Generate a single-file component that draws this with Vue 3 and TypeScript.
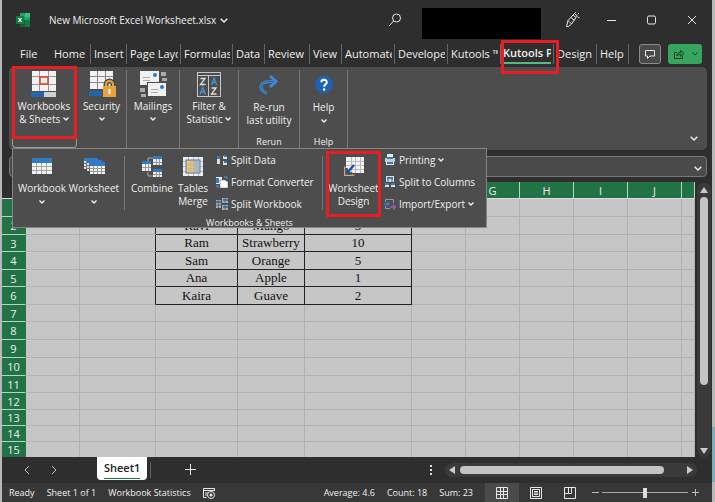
<script setup lang="ts">
import { ref } from 'vue'

interface Tab {
  label: string
  width: number
  active?: boolean
}

interface Row {
  n: string
  height: number
  cells?: [string, string, string]
}

const tabs: Tab[] = [
  { label: 'File', width: 39 },
  { label: 'Home', width: 40 },
  { label: 'Insert', width: 36 },
  { label: 'Page Layout', width: 54 },
  { label: 'Formulas', width: 52 },
  { label: 'Data', width: 32 },
  { label: 'Review', width: 45 },
  { label: 'View', width: 32 },
  { label: 'Automate', width: 53 },
  { label: 'Developer', width: 53 },
  { label: 'Kutools ™', width: 53 },
  { label: 'Kutools Plus', width: 53, active: true },
  { label: 'Design', width: 43 },
  { label: 'Help', width: 32 },
]

const columns = [
  { name: '', width: 54 },
  { name: '', width: 76 },
  { name: '', width: 82 },
  { name: '', width: 67 },
  { name: '', width: 107 },
  { name: '', width: 54 },
  { name: 'G', width: 54 },
  { name: 'H', width: 54 },
  { name: 'I', width: 54 },
  { name: 'J', width: 54 },
]

const rows: Row[] = [
  { n: '', height: 18, cells: ['', '', ''] },
  { n: '2', height: 18, cells: ['Ravi', 'Mango', '5'] },
  { n: '3', height: 17, cells: ['Ram', 'Strawberry', '10'] },
  { n: '4', height: 18, cells: ['Sam', 'Orange', '5'] },
  { n: '5', height: 17, cells: ['Ana', 'Apple', '1'] },
  { n: '6', height: 18, cells: ['Kaira', 'Guave', '2'] },
  { n: '7', height: 17 },
  { n: '8', height: 18 },
  { n: '9', height: 18 },
  { n: '10', height: 18 },
  { n: '11', height: 17 },
  { n: '12', height: 17 },
  { n: '13', height: 16 },
  { n: '14', height: 16 },
  { n: '15', height: 16 },
]

const formula = ref('')
const zoom = ref(50)
</script>

<template>
  <div class="desktop">
    <div class="window">
      <header class="titlebar">
        <svg class="logo" viewBox="0 0 14 14" width="14" height="14">
          <rect x="4" y="0" width="10" height="14" rx="1" fill="#21a366" />
          <path d="M9 0h4a1 1 0 0 1 1 1v3H9z" fill="#33c481" />
          <path d="M4 7h5v7H5a1 1 0 0 1-1-1z" fill="#185c37" />
          <path d="M9 7h5v6a1 1 0 0 1-1 1H9z" fill="#107c41" />
          <rect x="0" y="3" width="8" height="8" rx="1" fill="#107c41" />
          <path d="M2.500 5l3 4M5.500 5l-3 4" stroke="#fff" stroke-width="1.2" />
        </svg>
        <button class="filename">
          New Microsoft Excel Worksheet.xlsx
          <svg viewBox="0 0 8 5" width="8" height="5"><path d="M.7.7 4 4 7.300.7" class="line" /></svg>
        </button>
        <button class="icon-btn search" aria-label="Search">
          <svg viewBox="0 0 14 14" width="14" height="14">
            <circle cx="8.500" cy="5" r="4" class="thin" /><path d="M5.600 8 1 13" class="thin" />
          </svg>
        </button>
        <div class="account"></div>
        <button class="icon-btn pen" aria-label="Coming soon">
          <svg viewBox="0 0 16 16" width="16" height="16">
            <path d="M2.500 14.500 4 8.500 9 3l3 2.500-4.500 6.500-3 2.500zM4 8.500l3.500 3.500M7 5.500l3.500 3M9 3l1.500-1.500 3 2.500L12 5.500M13.800 2.300l1.200-1.300M14.200 5.500l1.300-.2M11.500.8l.2-.8" class="thin" />
          </svg>
        </button>
        <button class="icon-btn" aria-label="Minimize">
          <svg viewBox="0 0 10 10" width="10" height="10"><path d="M0 5.500h9" class="thin" /></svg>
        </button>
        <button class="icon-btn" aria-label="Maximize">
          <svg viewBox="0 0 10 10" width="10" height="10"><rect x=".5" y="1" width="8" height="8" rx="1.500" class="thin" /></svg>
        </button>
        <button class="icon-btn" aria-label="Close">
          <svg viewBox="0 0 10 10" width="10" height="10"><path d="M1 1l8 8M9 1 1 9" class="thin" /></svg>
        </button>
      </header>

      <nav class="tabs">
        <button
          v-for="tab in tabs"
          :key="tab.label"
          class="tab"
          :class="{ active: tab.active, first: tab.label === 'File', marked: tab.active }"
          :style="{ width: tab.width + 'px' }"
        >
          <span>{{ tab.label }}</span>
        </button>
        <div class="tab-actions">
          <button class="comment" aria-label="Comments">
            <svg viewBox="0 0 12 12" width="12" height="12"><path d="M1.500 2.500h9v5.500H6L3.500 10.500V8h-2z" class="thin" /></svg>
          </button>
          <button class="share" aria-label="Share">
            <svg viewBox="0 0 12 12" width="12" height="12">
              <path d="M4 4.500H1.500v6h8V8.500M3.800 8c.3-2.500 1.700-3.500 4-3.500V2.500l3 3-3 3v-2c-1.800 0-3 .3-4 1.500z" class="dark" />
            </svg>
            <svg viewBox="0 0 6 4" width="6" height="4"><path d="M.5.500 3 3 5.500.500" class="dark" /></svg>
          </button>
        </div>
      </nav>

      <section class="ribbon">
        <div class="group books">
          <button class="tool open marked">
            <svg viewBox="0 0 28 28" width="28" height="28">
              <rect x="2" y="1" width="24" height="20" fill="#f2f2f2" />
              <path d="M2 6.500h24M2 14.500h24M9.500 1v20M18.500 1v20" stroke="#999" />
              <rect x="10" y="7" width="8" height="7" fill="#eee" stroke="#d64a2c" stroke-width="1.600" />
              <rect x="1" y="22" width="13" height="5" fill="#2465ae" /><rect x="14" y="22" width="12" height="5" fill="#d0d0d0" />
            </svg>
            <span>Workbooks<br />&amp; Sheets <svg viewBox="0 0 6 4" width="6" height="4"><path d="M.5.500 3 3 5.500.500" class="line" /></svg></span>
          </button>
        </div>
        <div class="group security">
          <button class="tool">
            <svg viewBox="0 0 28 28" width="28" height="28">
              <rect x="2" y="1" width="23" height="18" fill="#f2f2f2" />
              <path d="M2 6.500h23M2 12.500h23M9.500 1v18M17.500 1v18" stroke="#888" />
              <rect x="1" y="21" width="13" height="5" fill="#2465ae" />
              <path d="M18 17v-2.500a3.500 3.500 0 0 1 7 0V17" fill="none" stroke="#4d4d4d" stroke-width="5" />
              <path d="M18 17v-2.500a3.500 3.500 0 0 1 7 0V17" fill="none" stroke="#e8a33d" stroke-width="2" />
              <rect x="15" y="16" width="13" height="11" fill="#e8a33d" />
              <path d="M21.500 19v5" stroke="#fff" stroke-width="2" />
            </svg>
            <span>Security</span>
            <svg viewBox="0 0 6 4" width="6" height="4"><path d="M.5.500 3 3 5.500.500" class="line" /></svg>
          </button>
        </div>
        <div class="group mailings">
          <button class="tool">
            <svg viewBox="0 0 28 28" width="28" height="28">
              <rect x="1" y="1" width="19" height="14" fill="#f0f0f0" /><circle cx="16" cy="5" r="2" fill="#2878cc" />
              <path d="M4 7.500h7M4 10.500h7" stroke="#aaa" />
              <path d="M22 2h5v4h-5zM23 8h5v3h-5zM1 18h5v4H1zM2 24h5v3H2z" fill="#aaa" />
              <rect x="8.500" y="12.500" width="19" height="14" fill="#f0f0f0" stroke="#4d4d4d" /><circle cx="23" cy="17" r="2" fill="#2878cc" />
              <path d="M12 19.500h7M12 22.500h7" stroke="#aaa" />
            </svg>
            <span>Mailings</span>
            <svg viewBox="0 0 6 4" width="6" height="4"><path d="M.5.500 3 3 5.500.500" class="line" /></svg>
          </button>
        </div>
        <div class="group filter">
          <button class="tool">
            <svg viewBox="0 0 28 28" width="28" height="28">
              <rect x="2.500" y="2.500" width="23" height="24" class="frame" /><path d="M2 5.500h24M13.500 6v21" class="frame" />
              <path d="M5.500 8.500h4.500l-4.500 6h5M16.500 18h4.500l-4.500 6h5" fill="none" stroke="#ddd" stroke-width="1.300" />
              <path d="M5 24.500l2.800-7 2.700 7M6 22h3.800M16.500 15l2.600-7 2.600 7M17.500 12.500h3.400" fill="none" stroke="#3f97db" stroke-width="1.300" />
            </svg>
            <span>Filter &amp;<br />Statistic <svg viewBox="0 0 6 4" width="6" height="4"><path d="M.5.500 3 3 5.500.500" class="line" /></svg></span>
          </button>
        </div>
        <div class="group rerun">
          <button class="tool low">
            <svg viewBox="0 0 22 22" width="22" height="22">
              <path d="M9 19C3 17 1.500 12.500 4.500 9.500 7 7 10 7.500 17 7.500M12 2l6 5.500-6 5.500" fill="none" stroke="#3b8ad8" stroke-width="3" />
              <path d="M9 18.500C3 17 2 12.500 4.500 9.500 7 7 10 7.500 16 7.500" fill="none" stroke="#31506e" stroke-width=".7" />
            </svg>
            <span>Re-run<br />last utility</span>
          </button>
          <small>Rerun</small>
        </div>
        <div class="group help">
          <button class="tool low">
            <svg viewBox="0 0 22 22" width="22" height="22">
              <circle cx="11" cy="10.500" r="9" fill="#1f63b0" />
              <path d="M8.300 8.300c.2-3.300 5.600-3.300 5.500 0 0 2-2.700 2.200-2.700 4.500" fill="none" stroke="#fff" stroke-width="2" /><circle cx="11.100" cy="15.500" r="1.200" fill="#fff" />
            </svg>
            <span>Help</span>
            <svg viewBox="0 0 6 4" width="6" height="4"><path d="M.5.500 3 3 5.500.500" class="line" /></svg>
          </button>
          <small>Help</small>
        </div>
        <button class="collapse" aria-label="Ribbon options">
          <svg viewBox="0 0 8 5" width="8" height="5"><path d="M.7.7 4 4 7.300.7" class="line" /></svg>
        </button>

        <div class="flyout">
          <div class="flyout-row">
            <button class="tool wide">
              <svg viewBox="0 0 24 24" width="24" height="24">
                <rect x="2" y="3" width="20" height="15" fill="#f2f2f2" /><rect x="2" y="2" width="20" height="5" fill="#2f7bc8" />
                <path d="M2 10.500h20M2 14.500h20M6.500 7v11M11.500 7v11M16.500 7v11" stroke="#a5a5a5" />
              </svg>
              <span>Workbook</span>
              <svg viewBox="0 0 6 4" width="6" height="4"><path d="M.5.500 3 3 5.500.500" class="line" /></svg>
            </button>
            <button class="tool wide">
              <svg viewBox="0 0 24 24" width="24" height="24">
                <path d="M2 4h14v9H2z" fill="#ddd" /><path d="M2 2h14v3H2z" fill="#2f7bc8" /><path d="M2 7.500h14M2 10.500h14M4.500 5v8" stroke="#777" />
                <path d="M5 6h15v9H5z" fill="#ddd" /><path d="M5 4h15v3H5z" fill="#2f7bc8" /><path d="M5 9.500h15M5 12.500h15M7.500 7v8" stroke="#777" />
                <path d="M8 8h15v10H8z" fill="#f2f2f2" /><path d="M8 6h15v4H8z" fill="#2f7bc8" /><path d="M8 12.500h15M8 15.500h15M11.500 10v8M15.500 10v8M19.500 10v8" stroke="#999" />
              </svg>
              <span>Worksheet</span>
              <svg viewBox="0 0 6 4" width="6" height="4"><path d="M.5.500 3 3 5.500.500" class="line" /></svg>
            </button>
            <i class="rule"></i>
            <button class="tool mid">
              <svg viewBox="0 0 22 24" width="22" height="24">
                <path d="M7 5V2h5M7 16v4h5" stroke="#aaa" fill="none" />
                <path d="M1 6h9v9H1zM12 1h9v8h-9zM12 14h9v7h-9z" fill="#eee" />
                <path d="M1 5h9v3H1zM12 0h9v3h-9zM12 13h9v3h-9z" fill="#2f7bc8" />
                <path d="M1 11.500h9M12 6.500h9M12 18.500h9M4.500 8v7M7.500 8v7M15.500 3v6M18.500 3v6M15.500 16v5M18.500 16v5" stroke="#999" />
              </svg>
              <span>Combine</span>
            </button>
            <button class="tool slim">
              <svg viewBox="0 0 22 24" width="22" height="24">
                <rect x="1" y="1" width="20" height="19" fill="#eee" /><path d="M1 5.500h20M1 10.500h20M1 15.500h20M6.500 1v19M11.500 1v19M16.500 1v19" stroke="#bbb" />
                <rect x="4" y="4" width="14" height="13" fill="#f2c46d" stroke="#2f7bc8" /><path d="M11 5h6v11h-6z" fill="#9fb9d4" /><path d="M5 8.500h12M5 12.500h12M8.500 5v11M13.500 5v11" stroke="#c7b58d" />
              </svg>
              <span>Tables<br />Merge</span>
            </button>
            <div class="stack left">
              <button>
                <svg viewBox="0 0 12 12" width="12" height="12"><path d="M1 3h3v7H1zM7 2h4v3H7zM7 7h4v4H7z" fill="#ddd" /><path d="M1 2h3v3H1zM8 1h3v2H8zM8 7h3v2H8z" fill="#2f7bc8" /></svg>
                Split Data
              </button>
              <button>
                <svg viewBox="0 0 12 12" width="12" height="12"><path d="M0 1h6v7H0z" fill="#eee" /><path d="M0 2h3v5H0z" fill="#2f7bc8" /><path d="M4 4h5l3 2v6H4z" fill="#fff" stroke="#777" stroke-width=".6" /><path d="M8 1h3v2M1 9v2h2" stroke="#4c9be0" fill="none" /></svg>
                Format Converter
              </button>
              <button>
                <svg viewBox="0 0 12 12" width="12" height="12"><path d="M0 2h5v8H0zM6 0h6v5H6zM6 7h6v5H6z" fill="#aaa" /><path d="M0 3h5v2H0zM7 1h5v2H7zM7 8h5v2H7z" fill="#2f7bc8" /><path d="M2.500 2v8M0 7h5M9 0v12" stroke="#555" stroke-width=".7" /></svg>
                Split Workbook
              </button>
            </div>
            <i class="rule"></i>
            <button class="tool design marked">
              <svg viewBox="0 0 24 24" width="24" height="24">
                <rect x="4" y="1" width="18" height="16" fill="#f2f2f2" /><path d="M4 5.500h18M4 9.500h18M4 13.500h18M9.500 1v16M13.500 1v16M18.500 1v16" stroke="#bbb" />
                <path d="M2 10l11 10H2z" fill="#e8a33d" /><path d="M12 9l-7 8M4.500 12v5.500h6" stroke="#1f4e9c" stroke-width="2.500" fill="none" />
              </svg>
              <span>Worksheet<br />Design</span>
            </button>
            <div class="stack">
              <button>
                <svg viewBox="0 0 12 12" width="12" height="12"><path d="M3 0h6v4H3zM2 8h8v3H2z" fill="#eee" /><path d="M1 4h10v4H1z" fill="#ccc" /><path d="M3 3h6v2H3zM3 8h6v2H3z" fill="#2f7bc8" /></svg>
                Printing <svg viewBox="0 0 6 4" width="6" height="4"><path d="M.5.500 3 3 5.500.500" class="line" /></svg>
              </button>
              <button>
                <svg viewBox="0 0 12 12" width="12" height="12"><path d="M2 0h8v6H2zM1 8h4v3H1zM7 8h4v3H7z" fill="#ddd" /><path d="M3 1h6v2H3zM1 7h4v2H1zM7 7h4v2H7z" fill="#2f7bc8" /><path d="M4 3v3M8 3v3" stroke="#555" /></svg>
                Split to Columns
              </button>
              <button>
                <svg viewBox="0 0 12 12" width="12" height="12"><path d="M1.500 4V1.500h8V5M1.500 8v2.500H6" stroke="#999" fill="none" /><path d="M0 6h5M3 4l2 2-2 2" stroke="#2f7bc8" fill="none" stroke-width="1.500" /><path d="M6 9h4M9 6.500 11.500 9 9 11.500" stroke="#a05ac0" fill="none" stroke-width="1.500" /></svg>
                Import/Export <svg viewBox="0 0 6 4" width="6" height="4"><path d="M.5.500 3 3 5.500.500" class="line" /></svg>
              </button>
            </div>
          </div>
          <small>Workbooks &amp; Sheets</small>
        </div>
      </section>

      <div class="formula">
        <input v-model="formula" type="text" aria-label="Formula bar" />
        <button aria-label="Expand formula bar">
          <svg viewBox="0 0 8 5" width="8" height="5"><path d="M.7.7 4 4 7.300.7" class="line" /></svg>
        </button>
      </div>

      <main class="sheet">
        <div class="cells">
          <table>
            <colgroup>
              <col class="row-head" />
              <col v-for="(c, i) in columns" :key="i" :style="{ width: c.width + 'px' }" />
              <col />
            </colgroup>
            <thead>
              <tr>
                <th class="corner"></th>
                <th v-for="(c, i) in columns" :key="i">{{ c.name }}</th>
                <th></th>
              </tr>
            </thead>
            <tbody>
              <tr v-for="(r, k) in rows" :key="k" :style="{ height: r.height + 'px' }">
                <th>{{ r.n }}</th>
                <td></td>
                <td :class="{ edge: r.cells }"></td>
                <td v-for="i in 3" :key="i" :class="{ filled: r.cells }">{{ r.cells ? r.cells[i - 1] : '' }}</td>
                <td v-for="i in 6" :key="'e' + i"></td>
              </tr>
            </tbody>
          </table>
        </div>
        <div class="vscroll">
          <svg viewBox="0 0 8 6" width="8" height="6"><path d="M4 0l4 6H0z" fill="#ccc" /></svg>
          <div class="vtrack"><div class="thumb"></div></div>
          <svg viewBox="0 0 8 6" width="8" height="6"><path d="M0 0h8L4 6z" fill="#ccc" /></svg>
        </div>
      </main>

      <div class="sheetbar">
        <button class="nav" aria-label="Previous sheet"><svg viewBox="0 0 6 10" width="6" height="10"><path d="M5 1 1 5l4 4" class="soft" /></svg></button>
        <button class="nav" aria-label="Next sheet"><svg viewBox="0 0 6 10" width="6" height="10"><path d="M1 1l4 4-4 4" class="soft" /></svg></button>
        <button class="sheet-tab"><span>Sheet1</span></button>
        <i class="sheet-rule"></i>
        <button class="add" aria-label="New sheet"><svg viewBox="0 0 11 11" width="11" height="11"><path d="M5.500 0v11M0 5.500h11" class="thin" /></svg></button>
        <svg class="dots" viewBox="0 0 2 10" width="2" height="10"><path d="M0 0h2v2H0zM0 4h2v2H0zM0 8h2v2H0z" fill="#ddd" /></svg>
        <div class="hscroll">
          <svg viewBox="0 0 6 8" width="6" height="8"><path d="M6 0v8L0 4z" fill="#ccc" /></svg>
          <div class="htrack"><div class="thumb"></div></div>
          <svg viewBox="0 0 6 8" width="6" height="8"><path d="M0 0l6 4-6 4z" fill="#ccc" /></svg>
        </div>
      </div>

      <footer class="status">
        <span>Ready</span>
        <span>Sheet 1 of 1</span>
        <span>Workbook Statistics</span>
        <svg viewBox="0 0 12 12" width="12" height="12">
          <path d="M11.500 4V1.500H.5v9h3M1 3.500h10M2 6h3M2 8h2" class="thin" /><circle cx="8" cy="8" r="3.500" fill="#333" class="ring" /><circle cx="8" cy="8" r="1.500" fill="#eee" />
        </svg>
        <div class="figures">
          <span>Average: 4.6</span>
          <span>Count: 18</span>
          <span>Sum: 23</span>
        </div>
        <div class="views">
          <button class="view current" aria-label="Normal view">
            <svg viewBox="0 0 12 12" width="12" height="12"><path d="M.5.500h11v11H.5zM4.500 0v12M7.500 0v12M0 4.500h12M0 7.500h12" class="thin" /></svg>
          </button>
          <button class="view" aria-label="Page layout view">
            <svg viewBox="0 0 12 12" width="12" height="12"><path d="M.5.500h11v11H.5zM2.500 2.500h7v7h-7zM4 4.500h4M4 6h4M4 7.500h4" class="thin" /></svg>
          </button>
          <button class="view" aria-label="Page break view">
            <svg viewBox="0 0 12 12" width="12" height="12"><path d="M.5.500h11v11H.5zM4.500 0v6.500h3V0M4.500 6.500H1" class="thin" /></svg>
          </button>
        </div>
        <div class="zoom">
          <button aria-label="Zoom out"><svg viewBox="0 0 8 8" width="8" height="8"><path d="M1 4.500h7" class="soft" /></svg></button>
          <input v-model="zoom" type="range" min="0" max="100" aria-label="Zoom" />
          <button aria-label="Zoom in"><svg viewBox="0 0 8 8" width="8" height="8"><path d="M1 4.500h7M4.500 1v7" class="soft" /></svg></button>
        </div>
      </footer>
    </div>
  </div>
</template>

<style>
body {
  background: #b8b8b8;
}
</style>

<style scoped>
* {
  box-sizing: border-box;
}
.desktop {
  height: 100vh;
  padding: 0 3px 0 2px;
  background: linear-gradient(90deg, #b8b8b8 50%, transparent 50%), linear-gradient(#b8b8b8 85%, #79aeb6 85% 96%, #b8b8b8 96%);
}
.window {
  display: flex;
  flex-direction: column;
  height: 100%;
  background: #2e2e2e;
  color: #f0f0f0;
  font: 11px/13px "Open Sans", "Noto Sans", sans-serif;
}
button {
  margin: 0;
  padding: 0;
  border: 0;
  background: none;
  color: inherit;
  font: inherit;
  white-space: nowrap;
}
svg {
  flex: none;
}
.line {
  fill: none;
  stroke: #f0f0f0;
  stroke-width: 1.4;
}
.thin,
.ring {
  stroke: #e8e8e8;
  stroke-width: 1;
}
.thin {
  fill: none;
}
.soft {
  fill: none;
  stroke: #bbb;
}
.dark {
  fill: none;
  stroke: #15381f;
}
.frame {
  fill: none;
  stroke: #c8c8c8;
}

.titlebar {
  display: flex;
  align-items: center;
  height: 40px;
  padding-left: 14px;
  flex: none;
}
.filename {
  display: flex;
  align-items: center;
  gap: 4px;
  margin-left: 19px;
  font-size: 10px;
}
.icon-btn {
  display: grid;
  place-items: center;
  width: 40px;
  height: 40px;
}
.search {
  margin-left: auto;
  width: 27px;
}
.account {
  width: 119px;
  height: 31px;
  margin: 7px 11px 0 14px;
  background: #000;
}

.tabs {
  display: flex;
  align-items: center;
  height: 27px;
  padding-left: 10px;
  flex: none;
}
.tab {
  position: relative;
  flex: none;
  height: 20px;
  padding: 0 2px 0 3px;
  border-right: 1px solid #666;
  text-align: center;
}
.tab.first {
  border-color: transparent;
}
.tab span {
  display: block;
  overflow: hidden;
  text-align: left;
  line-height: 18px;
}
.tab.first span {
  padding-left: 5px;
}
.tab.active {
  padding: 0 2px;
}
.tab.active span {
  border-bottom: 2px solid #58b981;
  font-weight: 600;
}
.marked {
  position: relative;
}
.marked::after {
  content: "";
  position: absolute;
  z-index: 3;
  inset: 0;
  border: 3px solid #ec1c24;
}
.tab.marked::after {
  inset: -4px -6px -10px 0;
}
.tab-actions {
  display: flex;
  gap: 7px;
  margin: 0 10px 0 auto;
}
.comment,
.share {
  display: flex;
  align-items: center;
  justify-content: center;
  gap: 7px;
  height: 20px;
  border-radius: 3px;
}
.comment {
  width: 22px;
  border: 1px solid #8a8a8a;
  background: #4a4a4a;
}
.share {
  width: 34px;
  background: #35a55f;
}

.ribbon {
  position: relative;
  display: flex;
  flex: none;
  height: 83px;
  margin: 0 5px 0 7px;
  padding-left: 3px;
  border-radius: 5px;
  background: #4d4d4d;
  font-size: 10px;
}
.group {
  display: flex;
  flex-direction: column;
  align-items: center;
  margin: 3px 0 2px;
  border-right: 1px solid #777;
}
.books {
  width: 65px;
  border-color: transparent;
}
.security {
  width: 50px;
}
.mailings {
  width: 53px;
}
.filter {
  width: 59px;
}
.rerun {
  width: 61px;
}
.help {
  width: 48px;
}
.tool {
  display: flex;
  flex-direction: column;
  align-items: center;
  gap: 2px;
}
.tool > span + svg {
  margin-top: 2px;
}
.tool span svg {
  vertical-align: 2px;
}
.tool.low {
  padding-top: 4px;
  gap: 5px;
}
.tool.low > span + svg {
  margin-top: 0;
}
.open {
  width: 65px;
  height: 78px;
  border: 1px solid #999;
  border-top: 0;
  border-radius: 0 0 4px 4px;
}
.open.marked::after {
  inset: -4px -1px 8px -1px;
}
small {
  margin-top: auto;
  font-size: 9px;
  line-height: 12px;
}
.collapse {
  align-self: flex-end;
  margin: 0 9px 9px auto;
  line-height: 5px;
}

.flyout {
  position: absolute;
  z-index: 2;
  top: 81px;
  left: 3px;
  display: flex;
  flex-direction: column;
  align-items: center;
  width: 475px;
  height: 80px;
  border: 1px solid #858585;
  background: #4d4d4d;
}
.flyout-row {
  display: flex;
  align-self: stretch;
  padding: 2px 3px 0;
}
.flyout .tool {
  padding-top: 5px;
  gap: 2px;
  height: 66px;
}
.flyout .tool > span + svg {
  margin-top: 3px;
}
.wide {
  width: 52px;
}
.mid {
  width: 46px;
}
.slim {
  width: 36px;
}
.rule {
  width: 1px;
  height: 54px;
  margin: 5px 4px 0;
  background: #777;
}
.stack {
  display: flex;
  flex-direction: column;
  margin-top: -2px;
  padding-left: 4px;
}
.stack.left {
  width: 107px;
  padding-left: 5px;
}
.stack button {
  display: flex;
  align-items: center;
  gap: 3px;
  height: 22px;
}
.design {
  width: 53px;
}
.design.marked::after {
  inset: 0 -1px 0 -1px;
}

.formula {
  display: flex;
  flex: none;
  height: 21px;
  margin: 6px 5px 5px 7px;
  padding-right: 4px;
  border: 1px solid #777;
  border-radius: 4px;
  background: #4a4a4a;
}
.formula input {
  flex: 1;
  min-width: 0;
  border: 0;
  outline: 0;
  background: none;
  color: inherit;
}

.sheet {
  display: flex;
  flex: 1;
  min-height: 0;
}
.cells {
  flex: 1;
  min-width: 0;
  overflow: hidden;
  background: #c6c6c6;
}
table {
  width: 100%;
  border-spacing: 0;
  table-layout: fixed;
}
.row-head {
  width: 24px;
}
th,
td {
  overflow: hidden;
  height: inherit;
  padding: 0;
  line-height: 15px;
  text-align: center;
  white-space: nowrap;
}
th {
  border-right: 1px solid #b9d3c4;
  background: #217346;
  font-weight: 400;
}
thead th {
  height: 17px;
  border-bottom: 1px solid #dcdcdc;
}
tbody th {
  border-right-color: #217346;
  border-bottom: 1px solid #b9d3c4;
}
.corner {
  background: #2e2e2e;
}
td {
  border-right: 1px solid #b1b1b1;
  border-bottom: 1px solid #b1b1b1;
  color: #111;
  font: 13px/16px "Liberation Serif", serif;
}
td.filled {
  border-color: #222;
}
td.edge {
  border-right-color: #222;
}
.vscroll {
  display: flex;
  flex-direction: column;
  align-items: center;
  gap: 4px;
  width: 14px;
  margin: 1px 1px 0 2px;
  padding: 4px 0 3px;
  border-radius: 7px;
  background: #3a3a3a;
}
.vtrack {
  flex: 1;
}
.thumb {
  border-radius: 4px;
  background: #c4c4c4;
}
.vtrack .thumb {
  width: 8px;
  height: 76%;
}

.sheetbar {
  display: flex;
  align-items: center;
  flex: none;
  height: 26px;
}
.nav {
  width: 27px;
}
.nav:first-child {
  margin-left: 11px;
}
.sheet-tab {
  align-self: flex-start;
  height: 23px;
  margin-left: 30px;
  padding: 0 7px;
  border-radius: 0 0 4px 4px;
  background: #fff;
  color: #222;
  font-weight: 600;
}
.sheet-tab span {
  display: block;
  border-bottom: 1px solid #217346;
  line-height: 20px;
}
.sheet-rule {
  width: 1px;
  height: 16px;
  margin-left: 3px;
  background: #666;
}
.add {
  margin-left: 34px;
  line-height: 10px;
}
.dots {
  margin-left: auto;
}
.hscroll {
  display: flex;
  align-items: center;
  gap: 5px;
  width: 252px;
  height: 14px;
  margin: 0 15px 0 13px;
  padding: 0 4px;
  border-radius: 7px;
  background: #3a3a3a;
}
.htrack {
  flex: 1;
}
.htrack .thumb {
  width: 92%;
  height: 8px;
}

.status {
  display: flex;
  align-items: center;
  gap: 12px;
  flex: none;
  height: 19px;
  padding-left: 7px;
  background: #383838;
  font-size: 9px;
}
.figures {
  display: flex;
  gap: 12px;
  margin-left: auto;
}
.views {
  display: flex;
}
.view {
  display: grid;
  place-items: center;
  width: 34px;
  height: 19px;
}
.view.current {
  background: #4a4a4a;
}
.zoom {
  display: flex;
  align-items: center;
  gap: 3px;
  margin-right: 13px;
  margin-left: -8px;
}
.zoom button {
  line-height: 8px;
}
.zoom input {
  appearance: none;
  width: 86px;
  height: 12px;
  margin: 0;
  background: linear-gradient(#aaa, #aaa) center / 100% 1px no-repeat;
}
.zoom input::-webkit-slider-thumb {
  appearance: none;
  width: 4px;
  height: 10px;
  background: #ddd;
}
</style>
